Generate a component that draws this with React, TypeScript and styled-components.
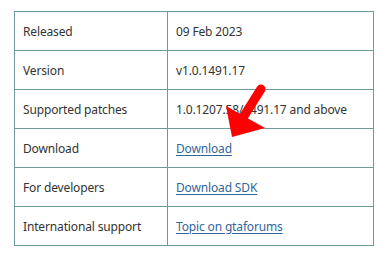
import React from "react";
import styled, { createGlobalStyle } from "styled-components";

const Global = createGlobalStyle`
  html, body { margin: 0; padding: 0; background: #ffffff; }
  body { font-family: "Noto Sans", "Noto Sans CJK KR", sans-serif; }
`;

const Page = styled.div`
  position: relative;
  width: 386px;
  height: 260px;
  padding: 11px 0 0 14px;
  box-sizing: border-box;
`;

const Table = styled.table`
  border-collapse: collapse;
  width: 360px;
  table-layout: fixed;
  font-size: 12px;
  letter-spacing: -0.15px;
  color: #333333;
`;

const Row = styled.tr`
  height: 39px;
`;

const Cell = styled.td<{ $w?: number }>`
  border: 1px solid #6e9a9c;
  padding: 0 0 0 8px;
  vertical-align: middle;
  white-space: nowrap;
  ${(p) => (p.$w ? `width: ${p.$w}px;` : "")}
`;

const Link = styled.a`
  color: #336699;
  text-decoration: underline;
  text-underline-offset: 2px;
`;

const Arrow = styled.svg`
  position: absolute;
  left: 0;
  top: 0;
  pointer-events: none;
`;

const rows: [string, React.ReactNode][] = [
  ["Released", "09 Feb 2023"],
  ["Version", "v1.0.1491.17"],
  ["Supported patches", "1.0.1207.58/1491.17 and above"],
  ["Download", <Link href="#">Download</Link>],
  ["For developers", <Link href="#">Download SDK</Link>],
  ["International support", <Link href="#">Topic on gtaforums</Link>],
];

export default function App() {
  return (
    <>
      <Global />
      <Page>
        <Table>
          <tbody>
            {rows.map(([k, v], i) => (
              <Row key={i}>
                <Cell $w={144}>{k}</Cell>
                <Cell>{v}</Cell>
              </Row>
            ))}
          </tbody>
        </Table>
        <Arrow width="386" height="260" viewBox="0 0 386 260">
          <line x1="261" y1="89" x2="244" y2="116" stroke="#ff0000" strokeWidth="9" strokeLinecap="round" />
          <polygon points="226,106 265,128 232,137" fill="#ff0000" />
        </Arrow>
      </Page>
    </>
  );
}
